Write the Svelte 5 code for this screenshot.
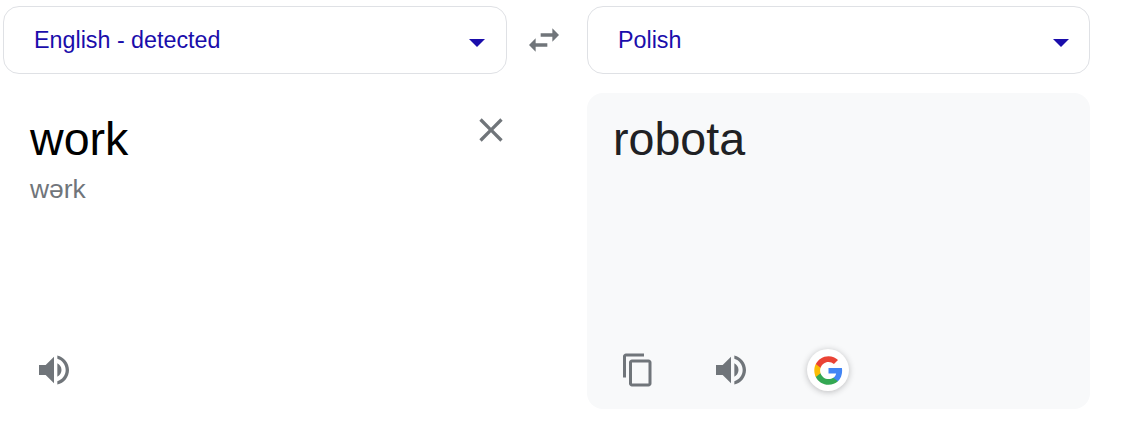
<script>
  const speakerPath = "M3 9v6h4l5 5V4L7 9H3zm13.5 3c0-1.77-1.02-3.29-2.5-4.03v8.05c1.48-.73 2.5-2.25 2.5-4.02zM14 3.23v2.06c2.89.86 5 3.54 5 6.71s-2.11 5.85-5 6.71v2.06c4.01-.91 7-4.49 7-8.77s-2.99-7.86-7-8.77z";
</script>

<div class="translator">
  <div class="selector">
    <span>English - detected</span>
    <i class="caret"></i>
  </div>

  <button class="swap" aria-label="Swap languages">
    <svg class="icon" viewBox="0 0 24 24" width="40" height="40"><path d="M6.99 11 3 15l3.99 4v-3H14v-2H6.99v-3zM21 9l-3.99-4v3H10v2h7.01v3L21 9z" /></svg>
  </button>

  <div class="selector">
    <span>Polish</span>
    <i class="caret"></i>
  </div>

  <section class="panel source">
    <div class="top">
      <div>
        <div class="phrase">work</div>
        <div class="phonetic">wərk</div>
      </div>
      <button class="clear" aria-label="Clear">
        <svg class="icon" viewBox="0 0 24 24" width="40" height="40"><path d="M19 6.41 17.59 5 12 10.59 6.41 5 5 6.41 10.59 12 5 17.59 6.41 19 12 13.41 17.59 19 19 17.59 13.41 12z" /></svg>
      </button>
    </div>
    <div class="actions">
      <svg class="icon listen" viewBox="0 0 24 24" width="40" height="40"><path d={speakerPath} /></svg>
    </div>
  </section>

  <div></div>

  <section class="panel target">
    <div class="phrase">robota</div>
    <div class="actions">
      <svg class="icon copy" viewBox="0 0 24 24" width="36" height="36"><path d="M16 1H4c-1.1 0-2 .9-2 2v14h2V3h12V1zm3 4H8c-1.1 0-2 .9-2 2v14c0 1.1.9 2 2 2h11c1.1 0 2-.9 2-2V7c0-1.1-.9-2-2-2zm0 16H8V7h11v14z" /></svg>
      <svg class="icon speak" viewBox="0 0 24 24" width="40" height="40"><path d={speakerPath} /></svg>
      <span class="badge">
        <svg viewBox="0 0 48 48" width="31" height="31">
          <path fill="#4285F4" d="M45.12 24.5c0-1.56-.14-3.06-.4-4.5H24v8.51h11.84c-.51 2.75-2.06 5.08-4.39 6.64v5.52h7.11c4.16-3.83 6.56-9.47 6.56-16.17z" />
          <path fill="#34A853" d="M24 46c5.94 0 10.92-1.97 14.56-5.33l-7.11-5.52c-1.97 1.32-4.49 2.1-7.45 2.1-5.73 0-10.58-3.87-12.31-9.07H4.34v5.7C7.96 41.07 15.4 46 24 46z" />
          <path fill="#FBBC05" d="M11.69 28.18C11.25 26.86 11 25.45 11 24s.25-2.86.69-4.18v-5.7H4.34C2.85 17.09 2 20.45 2 24c0 3.55.85 6.91 2.34 9.88l7.35-5.7z" />
          <path fill="#EA4335" d="M24 10.75c3.23 0 6.13 1.11 8.41 3.29l6.31-6.31C34.91 4.18 29.93 2 24 2 15.4 2 7.96 6.93 4.34 14.12l7.35 5.7c1.73-5.2 6.58-9.07 12.31-9.07z" />
        </svg>
      </span>
    </div>
  </section>
</div>

<style>
  :global(body) {
    background: #fff;
    font-family: "Liberation Sans", Arial, sans-serif;
  }

  .translator {
    display: grid;
    grid-template-columns: 504px 80px 503px;
    grid-template-rows: 68px 316px;
    row-gap: 19px;
    padding: 6px 0 0 3px;
  }

  .selector {
    display: flex;
    align-items: center;
    justify-content: space-between;
    box-sizing: border-box;
    padding: 0 20px 0 30px;
    border: 1px solid #dfe1e5;
    border-radius: 16px;
    color: #1a0dab;
    font-size: 23.3px;
  }

  .selector:first-child {
    padding-right: 21px;
  }

  .caret {
    width: 0;
    height: 0;
    margin-top: 5px;
    border-top: 8px solid #1a0dab;
    border-left: 8px solid transparent;
    border-right: 8px solid transparent;
  }

  button {
    display: flex;
    padding: 0;
    border: 0;
    background: none;
  }

  .swap {
    align-items: center;
    justify-content: center;
    padding-right: 6px;
  }

  .icon path {
    fill: #70757a;
  }

  .panel {
    display: flex;
    flex-direction: column;
    justify-content: space-between;
    box-sizing: border-box;
  }

  .source {
    padding: 16px 0 17px 27px;
  }

  .target {
    padding: 16px 26px 17px 26px;
    background: #f8f9fa;
    border-radius: 16px;
  }

  .top {
    display: flex;
    justify-content: space-between;
    align-items: flex-start;
  }

  .phrase {
    color: #000;
    font-size: 46.6px;
    line-height: 60px;
  }

  .target .phrase {
    color: #202124;
  }

  .phonetic {
    color: #70757a;
    font-size: 26.4px;
    line-height: 40px;
  }

  .clear {
    margin-top: 1px;
    margin-right: -4px;
  }

  .actions {
    display: flex;
    align-items: center;
    height: 44px;
  }

  .listen {
    margin-left: 4px;
  }

  .copy {
    margin-left: 7px;
  }

  .speak {
    margin-left: 55px;
  }

  .badge {
    display: flex;
    align-items: center;
    justify-content: center;
    width: 42px;
    height: 42px;
    margin-left: 56px;
    border-radius: 50%;
    background: #fff;
    box-shadow: 0 1px 6px rgba(32, 33, 36, 0.28);
  }
</style>
